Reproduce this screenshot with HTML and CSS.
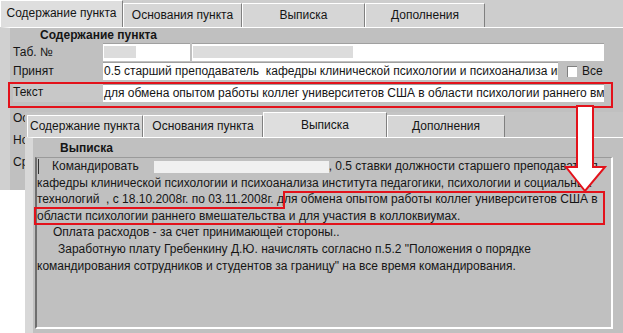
FILE: index.html
```html
<!DOCTYPE html>
<html lang="ru">
<head>
    <meta charset="UTF-8">
    <title>Содержание пункта</title>
    <link rel="stylesheet" href="styles.css">
</head>
<body>

<div class="desk">

    <!-- back window: point contents form -->
    <div class="window window-back">
        <div class="tabs">
            <div class="tab tab-content active">Содержание пункта</div>
            <div class="tab tab-basis">Основания пункта</div>
            <div class="tab tab-extract">Выписка</div>
            <div class="tab tab-extra">Дополнения</div>
        </div>
        <div class="panel">
            <div class="group-title">Содержание пункта</div>
            <div class="row row-num">
                <div class="label">Таб. №</div>
                <div class="field field-num"><span class="hidden-block block-num"></span></div>
                <div class="field field-name"><span class="hidden-block block-name"></span></div>
            </div>
            <div class="row row-post">
                <div class="label">Принят</div>
                <div class="field field-post">0.5 старший преподаватель&nbsp; кафедры клинической психологии и психоанализа ин</div>
                <label class="check"><span class="check-box"></span>Все</label>
            </div>
            <div class="row row-text">
                <div class="label label-boxed">Текст</div>
                <div class="field field-text">для обмена опытом работы коллег университетов США в области психологии раннего вме</div>
            </div>
            <div class="row row-more row-more-first"><div class="label">Основание</div></div>
            <div class="row row-more"><div class="label">Номер</div></div>
            <div class="row row-more"><div class="label">Срок</div></div>
        </div>
    </div>

    <!-- front window: extract tab -->
    <div class="window window-front">
        <div class="tabs">
            <div class="tab tab-content">Содержание пункта</div>
            <div class="tab tab-basis">Основания пункта</div>
            <div class="tab tab-extract active">Выписка</div>
            <div class="tab tab-extra">Дополнения</div>
        </div>
        <div class="panel">
            <div class="group-title">Выписка</div>
            <div class="memo">
                <div class="line line-first"><span class="caret"></span><span class="order">Командировать</span><span class="hidden-block block-person"></span>, 0.5 ставки должности старшего преподавателя</div>
                <div class="line">кафедры клинической психологии и психоанализа института педагогики, психологии и социальных</div>
                <div class="line">технологий&nbsp; , с 18.10.2008г. по 03.11.2008г. для обмена опытом работы коллег университетов США в</div>
                <div class="line">области психологии раннего вмешательства и для участия в коллоквиумах.</div>
                <div class="line indent-1">Оплата расходов - за счет принимающей стороны..</div>
                <div class="line indent-2">Заработную плату Гребенкину Д.Ю. начислять согласно п.5.2 "Положения о порядке</div>
                <div class="line">командирования сотрудников и студентов за границу" на все время командирования.</div>
            </div>
        </div>
    </div>

    <!-- red annotations drawn over both windows -->
    <svg class="notes" width="623" height="333" viewBox="0 0 623 333">
        <rect x="9" y="83" width="603" height="24" fill="none" stroke="#e3121b" stroke-width="2"/>
        <polygon points="284,192 604,192 604,224 35,224 35,208 284,208" fill="none" stroke="#e3121b" stroke-width="2"/>
        <polygon points="577,106 593,106 593,167 605,167 585,191 566,167 577,167" fill="#fff" stroke="#e3121b" stroke-width="2" stroke-linejoin="miter"/>
    </svg>

</div>

</body>
</html>
```

FILE: styles.css
```css
body {
    margin: 0;
    background: #fff;
    font-family: "Liberation Sans", Arial, sans-serif;
    font-size: 12px;
    color: #151515;
}
.desk {
    position: relative;
    width: 623px;
    height: 333px;
    overflow: hidden;
}
/* Windows */
.window {
    position: absolute;
    display: flex;
    flex-direction: column;
    background: #c0c0c0;
}
.window-back {
    left: 0;
    top: 0;
    width: 623px;
    height: 190px;
}
.window-front {
    left: 25px;
    top: 112px;
    width: 598px;
    height: 221px;
}
/* Tabs */
.tabs {
    display: flex;
    align-items: flex-end;
    background: #cdcdcd;
}
.window-back .tabs {
    height: 27px;
}
.window-front .tabs {
    height: 25px;
    padding-left: 2px;
    background: #c4c4c4;
}
.tab {
    box-sizing: border-box;
    height: 24px;
    line-height: 22px;
    text-align: center;
    white-space: nowrap;
    background: #d6d6d6;
    border-top: 1px solid #fff;
    border-left: 1px solid #fff;
    border-right: 1px solid #808080;
}
.tab.active {
    height: 27px;
    line-height: 24px;
    background: #dedede;
}
.window-back .tab-content { width: 123px; }
.window-back .tab-basis { width: 119px; }
.window-back .tab-extract { width: 123px; }
.window-back .tab-extra { width: 120px; }
.window-front .tab { height: 22px; line-height: 21px; }
.window-front .tab.active { height: 25px; line-height: 24px; }
.window-front .tab-content { width: 116px; }
.window-front .tab-basis { width: 120px; }
.window-front .tab-extract { width: 124px; }
.window-front .tab-extra { width: 118px; }
/* Panels */
.panel {
    flex: 1;
    display: flex;
    flex-direction: column;
    min-height: 0;
    background: #c0c0c0;
    border-top: 1px solid #fff;
}
.window-back .panel {
    border-left: 10px solid #d0d0d0;
    padding-left: 3px;
}
.window-front .panel {
    border-left: 8px solid #d8d8d8;
    padding-left: 2px;
}
.group-title {
    font-weight: bold;
    line-height: 14px;
    height: 14px;
}
.window-back .group-title {
    padding-left: 27px;
}
.window-front .group-title {
    padding-left: 25px;
    margin-top: 3px;
}
/* Form rows */
.row {
    display: flex;
    align-items: center;
    height: 18px;
}
.row-num { margin-top: 1px; }
.row-post { margin-top: 1px; }
.row-text { margin-top: 3px; height: 19px; }
.row-more { margin-top: 4px; }
.row-more-first { margin-top: 7px; }
.label {
    width: 90px;
    flex-shrink: 0;
    white-space: nowrap;
}
.label-boxed {
    align-self: stretch;
    line-height: 19px;
    background: #c8c8c8;
}
.field {
    box-sizing: border-box;
    height: 18px;
    line-height: 16px;
    padding-left: 1px;
    background: #fff;
    border-top: 1px solid #a0a0a0;
    white-space: nowrap;
    overflow: hidden;
}
.field-num { width: 87px; padding-top: 2px; }
.field-name { width: 412px; margin-left: 2px; padding-top: 2px; }
.field-post { width: 455px; }
.field-text { width: 501px; }
.hidden-block {
    display: inline-block;
    background: #dcdcdc;
    vertical-align: top;
}
.block-num { width: 32px; height: 12px; }
.block-name { width: 160px; height: 12px; }
.check {
    display: flex;
    align-items: center;
    margin-left: 9px;
    font-size: 12px;
}
.check-box {
    width: 9px;
    height: 10px;
    margin-right: 5px;
    background: #fff;
    border-top: 1px solid #808080;
    border-left: 1px solid #808080;
}
/* Memo */
.memo {
    flex: 1;
    margin: 2px 10px 4px 0;
    background: #c0c0c0;
    border-top: 1px solid #9a9a9a;
    border-left: 2px solid #6e6e6e;
    border-right: 2px solid #fff;
    border-bottom: 2px solid #fff;
    overflow: hidden;
}
.line {
    line-height: 16.6px;
    height: 16.6px;
    white-space: nowrap;
}
.caret {
    display: inline-block;
    width: 1px;
    height: 15px;
    margin-left: 1px;
    background: #333;
    vertical-align: middle;
}
.order {
    margin-left: 13px;
}
.block-person {
    width: 175px;
    height: 12px;
    margin-left: 15px;
    background: #f0f0f0;
    vertical-align: middle;
}
.indent-1 { padding-left: 16px; }
.indent-2 { padding-left: 21px; }
/* Annotations */
.notes {
    position: absolute;
    left: 0;
    top: 0;
    pointer-events: none;
}
```
